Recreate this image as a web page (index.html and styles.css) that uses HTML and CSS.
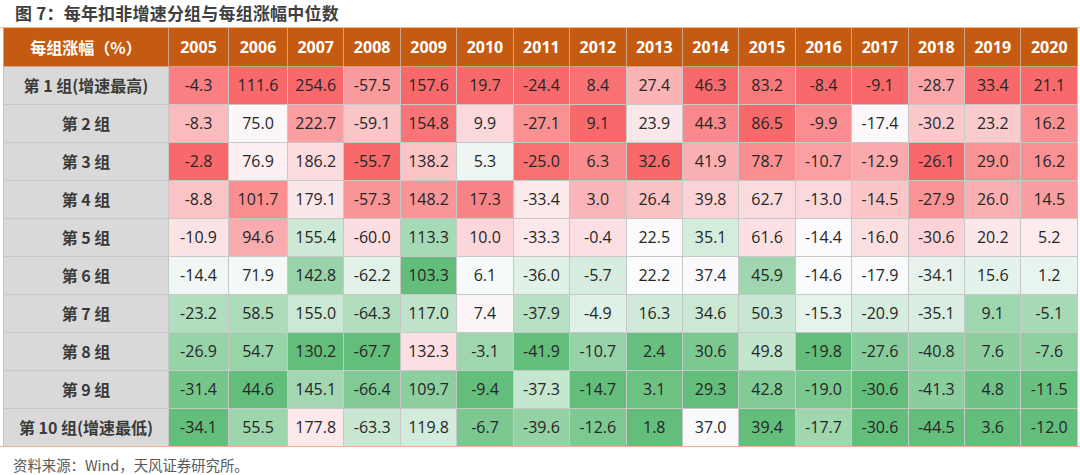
FILE: index.html
```html
<!DOCTYPE html>
<html lang="zh-CN">
<head>
<meta charset="utf-8">
<title>图 7：每年扣非增速分组与每组涨幅中位数</title>
<link rel="stylesheet" href="styles.css">
</head>
<body>
<figure class="figure">
  <figcaption class="title">图 7：每年扣非增速分组与每组涨幅中位数</figcaption>
  <div class="frame">
    <table class="heat">
      <colgroup>
        <col class="c-label"><col class="c-wide"><col class="c-wide2">
        <col><col><col><col><col><col><col><col><col><col><col><col><col><col>
      </colgroup>
      <thead>
        <tr><th class="corner">每组涨幅（%）</th><th>2005</th><th>2006</th><th>2007</th><th>2008</th><th>2009</th><th>2010</th><th>2011</th><th>2012</th><th>2013</th><th>2014</th><th>2015</th><th>2016</th><th>2017</th><th>2018</th><th>2019</th><th>2020</th></tr>
      </thead>
      <tbody>
        <tr><th>第 1 组(增速最高)</th><td>-4.3</td><td>111.6</td><td>254.6</td><td>-57.5</td><td>157.6</td><td>19.7</td><td>-24.4</td><td>8.4</td><td>27.4</td><td>46.3</td><td>83.2</td><td>-8.4</td><td>-9.1</td><td>-28.7</td><td>33.4</td><td>21.1</td></tr>
        <tr><th>第 2 组</th><td>-8.3</td><td>75.0</td><td>222.7</td><td>-59.1</td><td>154.8</td><td>9.9</td><td>-27.1</td><td>9.1</td><td>23.9</td><td>44.3</td><td>86.5</td><td>-9.9</td><td>-17.4</td><td>-30.2</td><td>23.2</td><td>16.2</td></tr>
        <tr><th>第 3 组</th><td>-2.8</td><td>76.9</td><td>186.2</td><td>-55.7</td><td>138.2</td><td>5.3</td><td>-25.0</td><td>6.3</td><td>32.6</td><td>41.9</td><td>78.7</td><td>-10.7</td><td>-12.9</td><td>-26.1</td><td>29.0</td><td>16.2</td></tr>
        <tr><th>第 4 组</th><td>-8.8</td><td>101.7</td><td>179.1</td><td>-57.3</td><td>148.2</td><td>17.3</td><td>-33.4</td><td>3.0</td><td>26.4</td><td>39.8</td><td>62.7</td><td>-13.0</td><td>-14.5</td><td>-27.9</td><td>26.0</td><td>14.5</td></tr>
        <tr><th>第 5 组</th><td>-10.9</td><td>94.6</td><td>155.4</td><td>-60.0</td><td>113.3</td><td>10.0</td><td>-33.3</td><td>-0.4</td><td>22.5</td><td>35.1</td><td>61.6</td><td>-14.4</td><td>-16.0</td><td>-30.6</td><td>20.2</td><td>5.2</td></tr>
        <tr><th>第 6 组</th><td>-14.4</td><td>71.9</td><td>142.8</td><td>-62.2</td><td>103.3</td><td>6.1</td><td>-36.0</td><td>-5.7</td><td>22.2</td><td>37.4</td><td>45.9</td><td>-14.6</td><td>-17.9</td><td>-34.1</td><td>15.6</td><td>1.2</td></tr>
        <tr><th>第 7 组</th><td>-23.2</td><td>58.5</td><td>155.0</td><td>-64.3</td><td>117.0</td><td>7.4</td><td>-37.9</td><td>-4.9</td><td>16.3</td><td>34.6</td><td>50.3</td><td>-15.3</td><td>-20.9</td><td>-35.1</td><td>9.1</td><td>-5.1</td></tr>
        <tr><th>第 8 组</th><td>-26.9</td><td>54.7</td><td>130.2</td><td>-67.7</td><td>132.3</td><td>-3.1</td><td>-41.9</td><td>-10.7</td><td>2.4</td><td>30.6</td><td>49.8</td><td>-19.8</td><td>-27.6</td><td>-40.8</td><td>7.6</td><td>-7.6</td></tr>
        <tr><th>第 9 组</th><td>-31.4</td><td>44.6</td><td>145.1</td><td>-66.4</td><td>109.7</td><td>-9.4</td><td>-37.3</td><td>-14.7</td><td>3.1</td><td>29.3</td><td>42.8</td><td>-19.0</td><td>-30.6</td><td>-41.3</td><td>4.8</td><td>-11.5</td></tr>
        <tr><th>第 10 组(增速最低)</th><td>-34.1</td><td>55.5</td><td>177.8</td><td>-63.3</td><td>119.8</td><td>-6.7</td><td>-39.6</td><td>-12.6</td><td>1.8</td><td>37.0</td><td>39.4</td><td>-17.7</td><td>-30.6</td><td>-44.5</td><td>3.6</td><td>-12.0</td></tr>
      </tbody>
    </table>
  </div>
  <p class="source">资料来源：Wind，天风证券研究所。</p>
</figure>
<script src="script.js"></script>
</body>
</html>
```
FILE: styles.css
```css
html, body {
  margin: 0;
  padding: 0;
  background: #ffffff;
}
body {
  font-family: "Open Sans", "Noto Sans CJK SC", sans-serif;
  color: #333333;
}
.figure {
  margin: 0;
  width: 1080px;
}
.title {
  height: 27px;
  padding-left: 15px;
  font-family: "Noto Sans CJK SC", sans-serif;
  font-size: 17px;
  font-weight: 700;
  letter-spacing: 0.2px;
  line-height: 25px;
  color: #404040;
}
.frame {
  border-top: 1px solid #f4b183;
  border-bottom: 1px solid #f4b183;
  padding-left: 3px;
}
.heat {
  width: 1075px;
  table-layout: fixed;
  border-collapse: collapse;
}
.c-label { width: 165px; }
.c-wide { width: 60px; }
.c-wide2 { width: 59px; }
.heat tr {
  height: 38px;
}
.heat th,
.heat td {
  border: 1px solid #c8c8c8;
  padding: 0;
  text-align: center;
  vertical-align: middle;
  white-space: nowrap;
}
.heat thead tr:first-child th {
  border-top: none;
}
.heat tbody tr:last-child th,
.heat tbody tr:last-child td {
  border-bottom: none;
}
.heat thead th {
  background: #c55a11;
  color: #ffffff;
  font-size: 16px;
  font-weight: 700;
  border-color: #c9a48a;
}
.heat thead th.corner {
  font-family: "Noto Sans CJK SC", sans-serif;
  font-size: 16px;
}
.heat tbody th {
  background: #d9d9d9;
  font-family: "Noto Sans CJK SC", sans-serif;
  font-size: 16px;
  font-weight: 700;
  color: #3a3a3a;
}
.heat td {
  font-size: 16px;
  color: #262626;
  background: #fcfcff;
}
.source {
  margin: 0;
  padding: 8px 0 0 13px;
  font-family: "Noto Sans CJK SC", sans-serif;
  font-size: 14.4px;
  line-height: 20px;
  color: #595959;
}
```
FILE: script.js
```js
(function () {
  var GREEN = [99, 190, 123];
  var WHITE = [252, 252, 255];
  var RED = [248, 105, 107];
  function mix(a, b, t) {
    return 'rgb(' + a.map(function (v, i) { return Math.round(v + (b[i] - v) * t); }).join(',') + ')';
  }
  var rows = Array.prototype.slice.call(document.querySelectorAll('.heat tbody tr'));
  var cols = rows[0].querySelectorAll('td').length;
  for (var c = 0; c < cols; c++) {
    var cells = rows.map(function (r) { return r.querySelectorAll('td')[c]; });
    var vals = cells.map(function (td) { return parseFloat(td.textContent); });
    var sorted = vals.slice().sort(function (a, b) { return a - b; });
    var n = sorted.length;
    var min = sorted[0], max = sorted[n - 1];
    var pos = (n - 1) * 0.5, lo = Math.floor(pos), hi = Math.ceil(pos);
    var mid = sorted[lo] + (sorted[hi] - sorted[lo]) * (pos - lo);
    cells.forEach(function (td, i) {
      var v = vals[i], color;
      if (v >= mid) {
        color = mix(WHITE, RED, max === mid ? 0 : (v - mid) / (max - mid));
      } else {
        color = mix(WHITE, GREEN, mid === min ? 0 : (mid - v) / (mid - min));
      }
      td.style.backgroundColor = color;
    });
  }
})();
```
